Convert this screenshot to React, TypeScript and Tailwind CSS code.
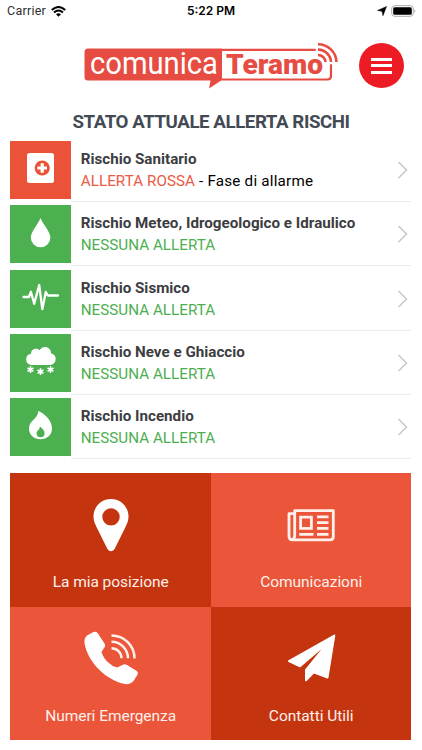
import React from 'react';

type Risk = { name: string; status: string; alert?: boolean; phase?: string; icon: React.ReactNode };

const Flake = ({ x, y }: { x: number; y: number }) => (
  <path
    d="M0-3.4V3.4M-3-1.7L3 1.7M-3 1.7L3-1.7"
    transform={`translate(${x} ${y})`}
    stroke="white"
    strokeWidth="1.6"
  />
);

const risks: Risk[] = [
  {
    name: 'Rischio Sanitario',
    status: 'ALLERTA ROSSA',
    alert: true,
    phase: 'Fase di allarme',
    icon: (
      <>
        <rect x="16.5" y="12" width="27" height="30" rx="2.5" fill="white" />
        <circle cx="31.7" cy="27" r="7.6" fill="#eb5338" />
        <path d="M31.7 22.2v9.6M26.9 27h9.6" stroke="white" strokeWidth="3.2" />
      </>
    ),
  },
  {
    name: 'Rischio Meteo, Idrogeologico e Idraulico',
    status: 'NESSUNA ALLERTA',
    icon: <path d="M30 13C27.500 19.500 20.300 26.500 20.300 32.600a9.800 9.600 0 0 0 19.600 0C39.900 26.500 32.500 19.500 30 13Z" fill="white" />,
  },
  {
    name: 'Rischio Sismico',
    status: 'NESSUNA ALLERTA',
    icon: (
      <path
        d="M13 27H18.400L20.400 21.800L23.700 33.800L28.700 15L31.800 39.200L35.300 22L37.400 25.500H47.500"
        fill="none"
        stroke="white"
        strokeWidth="2.300"
        strokeLinecap="round"
        strokeLinejoin="round"
      />
    ),
  },
  {
    name: 'Rischio Neve e Ghiaccio',
    status: 'NESSUNA ALLERTA',
    icon: (
      <>
        <path d="M21 31a5.900 5.700 0 0 1-.4-11.300C20.200 15.500 26 13.200 29 16.300C31.800 10.900 40.500 11.800 40.700 19.600C47 20.500 46.800 30.500 40 31Z" fill="white" />
        <Flake x={20} y={35.7} />
        <Flake x={30} y={37.7} />
        <Flake x={40} y={35.7} />
      </>
    ),
  },
  {
    name: 'Rischio Incendio',
    status: 'NESSUNA ALLERTA',
    icon: (
      <>
        <path d="M27.800 13C34.500 16 41.500 22.500 41.500 30.500C41.500 37 36.500 41.200 30 41.200C23.500 41.200 18.500 37 18.500 30.500C18.500 22.500 27.500 21 27.800 13Z" fill="white" />
        <path d="M29.400 28.500C32.500 31 34.100 33 34.100 35.200a4 4 0 0 1-8 0C26.100 32.500 29.200 32 29.400 28.500Z" fill="#4caf50" />
      </>
    ),
  },
];

const tiles = [
  {
    label: 'La mia posizione',
    box: 'bg-[#c4350f]',
    icon: (
      <path
        fillRule="evenodd"
        d="M100 26C90 26 82.500 34 82.500 43.500C82.500 48 84 50.500 85.500 54L96.200 75.500C98 79 102 79 103.800 75.500L114.500 54C116 50.500 117.500 48 117.500 43.500C117.500 34 110 26 100 26ZM100 35.200a8.700 8.700 0 1 1 0 17.400a8.700 8.700 0 0 1 0-17.400Z"
        fill="white"
      />
    ),
  },
  {
    label: 'Comunicazioni',
    box: 'bg-[#eb5539]',
    icon: (
      <g fill="none" stroke="#fff0eb" strokeWidth="2.800">
        <path d="M83.700 37.700H122.300V63.500Q122.300 66.900 119 66.900H81.500Q78 66.900 78 63.200V40.700H83.700Z" strokeLinejoin="round" />
        <path d="M83.700 39V62.500Q83.700 66 80.800 66.700" />
        <path d="M89.600 44.200H100.400V55.400H89.600ZM106 43.900H117.500M106 49.700H117.500M106 55.400H117.500M106 61.300H117.500M88.200 61.300H102.500" />
      </g>
    ),
  },
  {
    label: 'Numeri Emergenza',
    box: 'bg-[#eb5539]',
    icon: (
      <>
        <path d="M76 28.500L82.500 25Q85.500 23.800 87 26.500L93.500 36.500Q95 39 93 41L90.500 45Q92.500 52 98 56Q102 60 106 60.500L111 58.300Q113.500 56.300 116 58L125 63.500Q128 65.500 126.300 68L122.500 74Q118.500 79 109.500 76C92 70 76.500 54 73.500 36Q73 31 76 28.500Z" fill="white" />
        <path d="M100.500 28.500A23 23 0 0 1 123.500 51.500M100.500 34.800A16.500 16.500 0 0 1 117 51.300M100.500 41.200A10 10 0 0 1 110.500 51.200" fill="none" stroke="#fff0eb" strokeWidth="2.500" />
      </>
    ),
  },
  {
    label: 'Contatti Utili',
    box: 'bg-[#c4350f]',
    icon: (
      <path
        d="M123.300 28.500L78 54L89 59.300L118.500 34L95 63V73.300L102.700 65.200L116.500 70.500Z"
        fill="white"
        stroke="white"
        strokeWidth="2"
        strokeLinejoin="round"
      />
    ),
  },
];

function StatusBar() {
  return (
    <div className="grid h-[22px] grid-cols-3 items-center text-[12.500px] leading-none text-black">
      <div className="flex items-center gap-[5px] pl-[7px] tracking-[0.250px] text-[#303030]">
        Carrier
        <svg width="15" height="11" viewBox="0 0 15 11" fill="none" stroke="black" strokeWidth="2">
          <path d="M.8 4Q7.500-2 14.200 4M3 6.500Q7.500 2.500 12 6.500" />
          <path d="M5 8.200Q7.500 6.200 10 8.200L7.500 10.800Z" fill="black" stroke="none" />
        </svg>
      </div>
      <div className="text-center font-[Inter,sans-serif] text-[12px] font-semibold">5:22 PM</div>
      <div className="flex items-center justify-end gap-1 pr-[6px]">
        <svg width="10" height="10" viewBox="0 0 10 10"><path d="M9.500.5L6 9.700L5 5.200L.5 4.500Z" fill="black" stroke="black" strokeWidth=".5" /></svg>
        <svg width="25" height="12" viewBox="0 0 25 12">
          <rect x=".7" y=".7" width="21.600" height="10.600" rx="3" fill="white" stroke="#aaa" />
          <rect x="2.200" y="2.200" width="18.600" height="7.600" rx="1.500" fill="black" />
          <path d="M23.500 4.200Q25.300 6 23.500 7.800Z" fill="#999" />
        </svg>
      </div>
    </div>
  );
}

function Logo() {
  return (
    <svg width="260" height="52" viewBox="0 0 260 52" className="ml-[80px]" role="img">
      <path d="M8 8.500H142V40L129 48.500L130.500 40.500H8Q4.500 40.500 4.500 37V12Q4.500 8.500 8 8.500Z" fill="#e74c43" />
      <path d="M142 9.800H235M142 39.500H247.500Q251 39.500 251 36V25" fill="none" stroke="#e74c43" strokeWidth="2.200" strokeLinecap="round" />
      <text x="10" y="34.400" textLength="128" fontSize="32" fill="white" fontFamily="Roboto" lengthAdjust="spacingAndGlyphs">comunica</text>
      <text x="146" y="34.200" textLength="97" fontSize="28" fontWeight="900" fill="#e74c43" fontFamily="Roboto" lengthAdjust="spacingAndGlyphs">Teramo</text>
      <path d="M238 4.200A18.500 18.500 0 0 1 256.500 22M238 9.600A13 13 0 0 1 251 22M238 15A7.500 7.500 0 0 1 245.500 22" fill="none" stroke="#e74c43" strokeWidth="2.600" />
    </svg>
  );
}

export default function App() {
  return (
    <div className="h-[750px] w-[422px] overflow-hidden bg-white font-[Roboto,sans-serif]">
      <StatusBar />
      <header className="flex h-[88px] items-start pt-[18px]">
        <Logo />
        <button className="ml-[19px] mt-[3px] flex size-[45px] flex-col items-center justify-center gap-[3.500px] rounded-full bg-[#ed1c24]" aria-label="Menu">
          <span className="h-[3px] w-[21px] bg-white" />
          <span className="h-[3px] w-[21px] bg-white" />
          <span className="h-[3px] w-[21px] bg-white" />
        </button>
      </header>
      <h1 className="h-[31px] text-center text-[18.700px] font-bold leading-[25px] tracking-[-0.440px] text-[#434a54]">STATO ATTUALE ALLERTA RISCHI</h1>
      <ul className="ml-[10.400px] mr-[10.600px]">
        {risks.map((r) => (
          <li key={r.name} className="flex h-[64.250px] items-start">
            <svg width="60.300" height="58" viewBox="-0.500 0 60.300 58" className={r.alert ? 'shrink-0 bg-[#eb5338]' : 'shrink-0 bg-[#4caf50]'}>
              {r.icon}
            </svg>
            <div className="flex h-[61px] grow items-start border-b border-[#ececec] pl-[10px]">
              <div className="grow whitespace-nowrap pt-[7px] text-[15.200px] leading-[22px]">
                <div className="font-bold text-[#3d3d3f]">{r.name}</div>
                <div className="text-black">
                  <span className={r.alert ? 'tracking-[0.060px] text-[#eb5a42]' : 'tracking-[0.030px] text-[#4caf50]'}>{r.status}</span>
                  {r.phase && <span className="tracking-[0.220px]">{' - ' + r.phase}</span>}
                </div>
              </div>
              <svg width="11" height="18" viewBox="0 0 11 18" className="mr-[3px] mt-[20px]" fill="none" stroke="#c7c7cc" strokeWidth="1.500">
                <path d="M1.500 1L9.500 9L1.500 17" />
              </svg>
            </div>
          </li>
        ))}
      </ul>
      <nav className="ml-[10.400px] mr-[10.600px] mt-[11px] grid grid-cols-2">
        {tiles.map((t) => (
          <a key={t.label} className={'flex h-[133.500px] flex-col items-center text-white ' + t.box}>
            <svg width="200" height="98" viewBox="0 0 200 98" className="shrink-0">{t.icon}</svg>
            <span className="text-[15.500px] leading-[23px] tracking-[-0.040px] text-[#fff0eb]">{t.label}</span>
          </a>
        ))}
      </nav>
    </div>
  );
}
